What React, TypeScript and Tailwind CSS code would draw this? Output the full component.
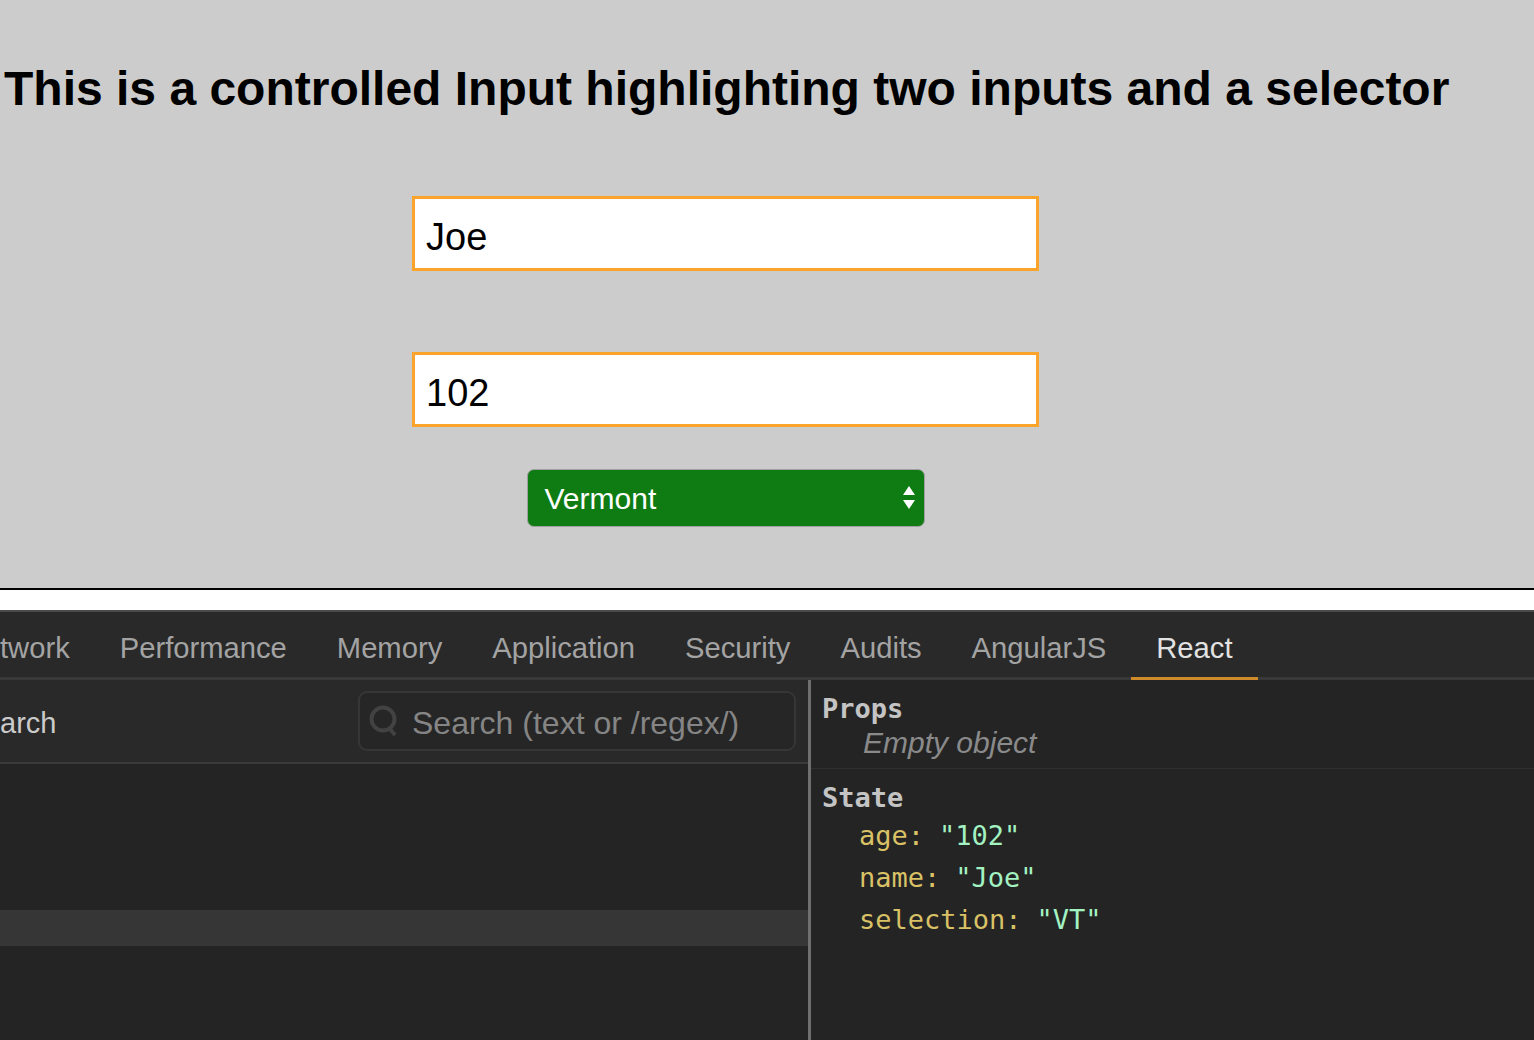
import React from "react";

const sans = "font-['Liberation_Sans',Arial,sans-serif]";
const mono = "font-['DejaVu_Sans_Mono','Liberation_Mono',monospace]";

const tabs = ["twork", "Performance", "Memory", "Application", "Security", "Audits", "AngularJS", "React"];

const state: [string, string][] = [
  ["age", '"102"'],
  ["name", '"Joe"'],
  ["selection", '"VT"'],
];

const App = () => {
  return (
    <div className={`h-[1040px] w-[1534px] overflow-hidden flex flex-col ${sans}`}>
      {/* Page under test */}
      <div className="h-[588px] bg-[#cccccc] shrink-0">
        <h1 className="pt-[61px] pl-[4px] text-[48px] leading-[55px] font-bold text-black whitespace-nowrap">
          This is a controlled Input highlighting two inputs and a selector
        </h1>
        <div className="ml-[412px] w-[627px] flex flex-col items-center">
          <input
            defaultValue="Joe"
            className={`mt-[80px] w-full h-[75px] border-[3px] border-[#fba42c] bg-white pl-[11px] pt-[8px] text-[38px] text-black outline-none ${sans}`}
          />
          <input
            defaultValue="102"
            className={`mt-[81px] w-full h-[75px] border-[3px] border-[#fba42c] bg-white pl-[11px] pt-[8px] text-[38px] text-black outline-none ${sans}`}
          />
          <div className="mt-[42px] w-[398px] h-[58px] rounded-[7px] border border-[#a0a0a0] bg-[#0f7c13] flex items-center justify-between pl-[17px] pr-[8px]">
            <span className="text-[30px] text-white">Vermont</span>
            <svg width="14" height="28" viewBox="0 0 14 28">
              <polygon points="7,2 13,11 1,11" fill="white" />
              <polygon points="1,16 13,16 7,25" fill="white" />
            </svg>
          </div>
        </div>
      </div>
      <div className="h-[2px] bg-black shrink-0" />
      <div className="h-[20px] bg-white shrink-0" />
      <div className="h-[2px] bg-[#4a4a4a] shrink-0" />

      {/* DevTools tab bar */}
      <div className="h-[68px] shrink-0 bg-[#292929] border-b-[3px] border-[#383838] flex">
        {tabs.map((t, i) => (
          <div
            key={t}
            className={`flex items-center pt-[8px] -mb-[3px] border-b-[3px] text-[29.2px] whitespace-nowrap ${
              i === 0 ? "pr-[25px]" : "px-[25px]"
            } ${t === "React" ? "border-[#cf8a2a] text-[#e2e2e2]" : "border-transparent text-[#a3a3a3]"}`}
          >
            {t}
          </div>
        ))}
      </div>

      {/* DevTools content */}
      <div className="flex-1 flex bg-[#242424] min-h-0">
        <div className="w-[808px] flex flex-col">
          <div className="h-[84px] bg-[#292929] border-b-2 border-[#3a3a3a] flex items-center justify-between pr-[12px]">
            <span className="pt-[5px] text-[29px] text-[#cbcbcb]">arch</span>
            <div className="w-[438px] h-[60px] rounded-[9px] border-2 border-[#363636] bg-[#262626] flex items-center pl-[8px] gap-[12px]">
              <svg width="32" height="34" viewBox="0 0 32 34" fill="none">
                <circle cx="15" cy="15" r="11.5" stroke="#424242" strokeWidth="4" />
                <line x1="22" y1="25" x2="27" y2="31" stroke="#424242" strokeWidth="4" />
              </svg>
              <span className="pt-[3px] text-[32px] text-[#858585] whitespace-nowrap">Search (text or /regex/)</span>
            </div>
          </div>
          <div className="mt-[146px] h-[36px] bg-[#363636]" />
        </div>
        <div className="w-[3px] bg-[#6f6f6f]" />
        <div className="flex-1 flex flex-col">
          <div className="pt-[12px] pb-[8px] pl-[11px] border-b border-[#303030]">
            <div className={`${mono} font-bold text-[27px] leading-[34px] text-[#c4c4c4]`}>Props</div>
            <div className="pl-[41px] italic text-[30px] leading-[34px] text-[#8a8a8a]">Empty object</div>
          </div>
          <div className="pt-[12px] pl-[11px]">
            <div className={`${mono} font-bold text-[27px] leading-[34px] text-[#c4c4c4]`}>State</div>
            {state.map(([k, v]) => (
              <div key={k} className={`${mono} pl-[37px] text-[27px] leading-[42px] whitespace-pre`}>
                <span className="text-[#d9c166]">{k}:</span>
                <span className="text-[#a3f2c2] ml-[15px]">{v}</span>
              </div>
            ))}
          </div>
        </div>
      </div>
    </div>
  );
};

export default App;
